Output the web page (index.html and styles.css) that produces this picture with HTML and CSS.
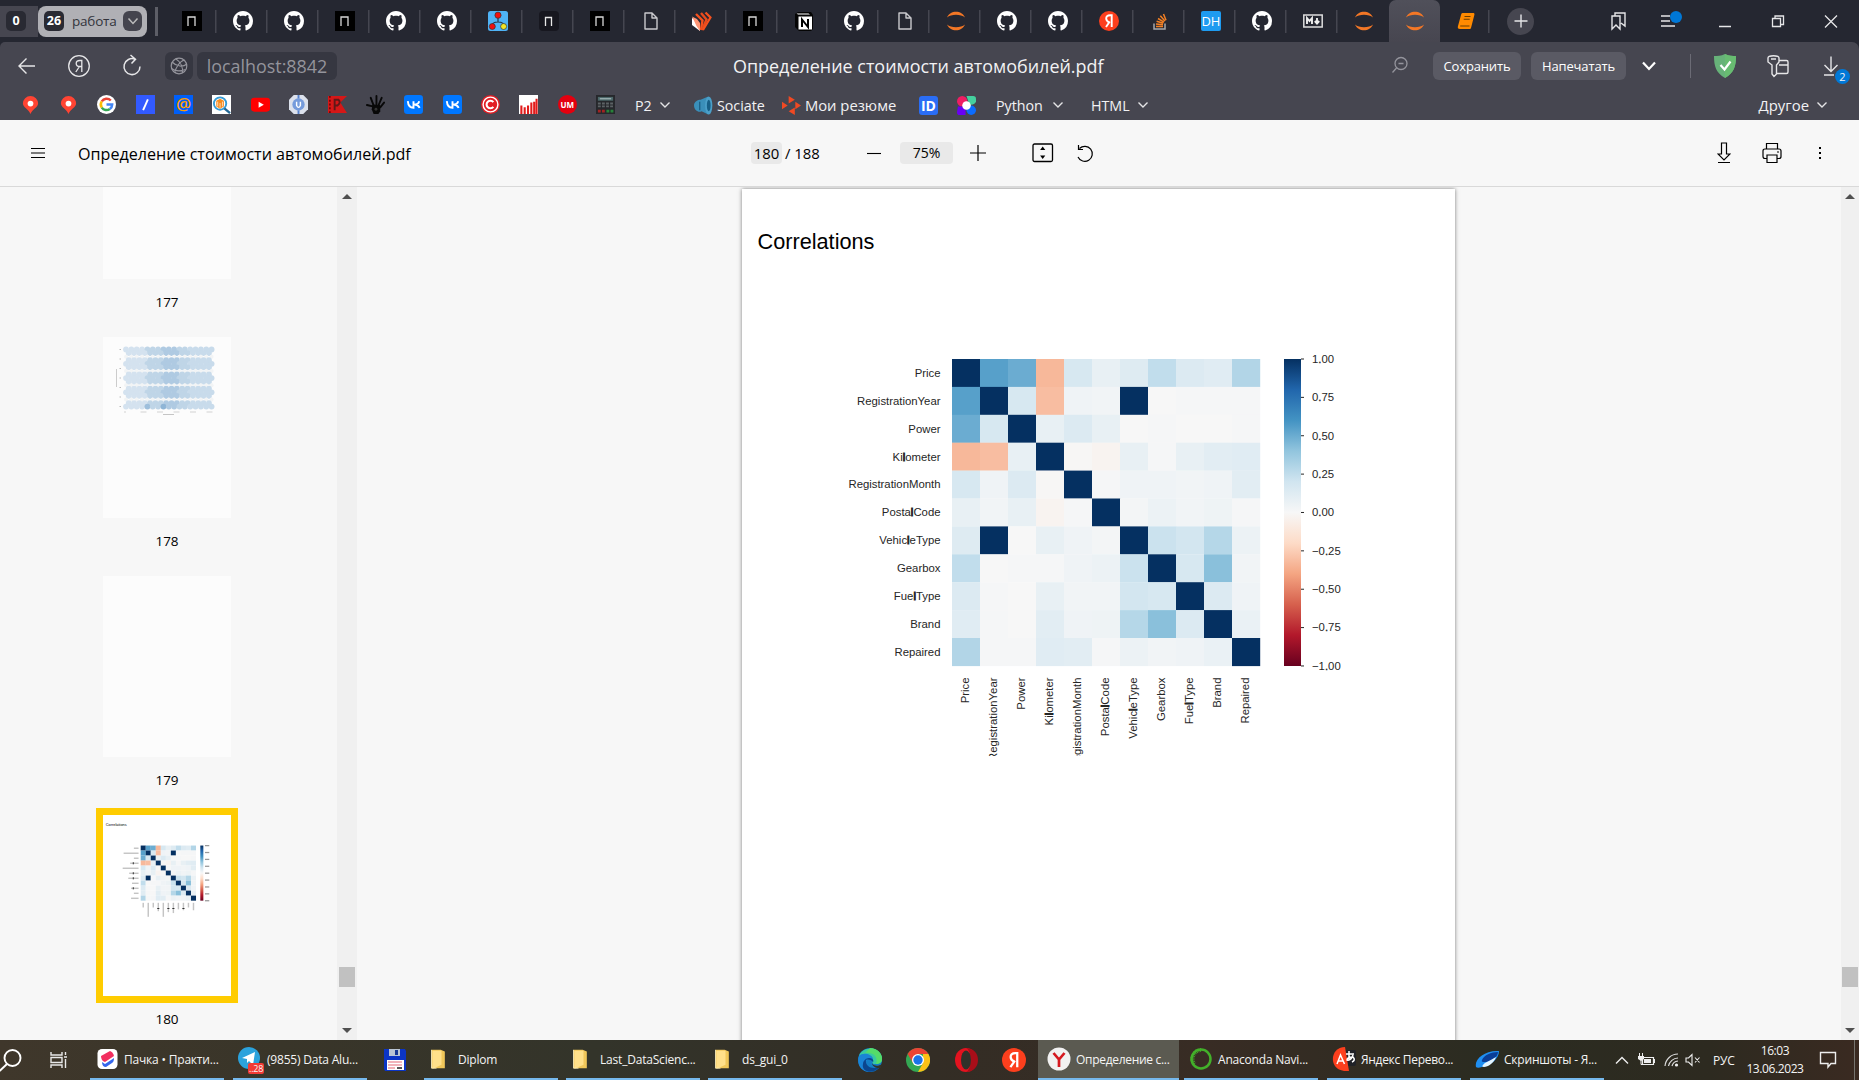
FILE: index.html
```html
<!DOCTYPE html>
<html lang="ru">
<head>
<meta charset="utf-8">
<title>Определение стоимости автомобилей.pdf</title>
<link rel="stylesheet" href="styles.css">
</head>
<body>
<svg class="defs" width="0" height="0" aria-hidden="true">
  <symbol id="gh" viewBox="0 0 16 16"><path fill="#fff" d="M8 0C3.58 0 0 3.58 0 8c0 3.54 2.29 6.53 5.47 7.59.4.07.55-.17.55-.38 0-.19-.01-.82-.01-1.49-2.01.37-2.53-.49-2.69-.94-.09-.23-.48-.94-.82-1.13-.28-.15-.68-.52-.01-.53.63-.01 1.08.58 1.23.82.72 1.21 1.87.87 2.33.66.07-.52.28-.87.51-1.07-1.78-.2-3.64-.89-3.64-3.95 0-.87.31-1.59.82-2.15-.08-.2-.36-1.02.08-2.12 0 0 .67-.21 2.2.82.64-.18 1.32-.27 2-.27s1.36.09 2 .27c1.53-1.04 2.2-.82 2.2-.82.44 1.1.16 1.92.08 2.12.51.56.82 1.27.82 2.15 0 3.07-1.87 3.75-3.65 3.95.29.25.54.73.54 1.48 0 1.07-.01 1.93-.01 2.2 0 .21.15.46.55.38A8.01 8.01 0 0 0 16 8c0-4.42-3.58-8-8-8z"/></symbol>
  <symbol id="n" viewBox="0 0 20 20"><path fill="#000" d="M0 0h20v20H0z"/><path d="M6 15V6h7v9" fill="none" stroke="#d8d8d8" stroke-width="1.3"/></symbol>
  <symbol id="nd" viewBox="0 0 20 20"><rect width="20" height="20" rx="4" fill="#17171f"/><path d="M6.500 15V6.500h6V15" fill="none" stroke="#e8e8e8" stroke-width="1.3"/></symbol>
  <symbol id="file" viewBox="0 0 20 20"><path d="M4 2h7l5 5v11H4zM11 2v5h5" fill="none" stroke="#c9c9cd" stroke-width="1.4" stroke-linejoin="round"/></symbol>
  <symbol id="jup" viewBox="0 0 20 20"><path fill="#f37726" d="M1 6.500C4-1.200 16-1.200 19 6.500 15 2.800 5 2.800 1 6.500zM1 13.500c3 7.700 15 7.700 18 0-4 3.700-14 3.700-18 0z"/></symbol>
  <symbol id="tree" viewBox="0 0 20 20"><rect width="20" height="20" rx="2.500" fill="#4fb3f6"/><path d="M10 5v6M4 15c0-3 2-4 6-4s6 1 6 4" fill="none" stroke="#234" stroke-width="1.200"/><g stroke="#333" stroke-width=".7"><circle cx="10" cy="4.200" r="3.100" fill="#f00f0f"/><circle cx="4.300" cy="15.500" r="3" fill="#f00f0f"/><circle cx="15.600" cy="15.500" r="3" fill="#f2e526"/></g></symbol>
  <symbol id="rp" viewBox="0 0 20 20"><path d="M0 7l4 2 4 5v6l-8-6z" fill="#fff"/><path d="M0 5.500 5 8l3 4v8l-3.500-5z" fill="#ff9575"/><path d="M4 3l6.500 6.500L9 19" fill="none" stroke="#f4511e" stroke-width="2.400"/><path d="M9 2l5.500 6.500L10 19" fill="none" stroke="#e84a1c" stroke-width="2.400"/><path d="M13.500 1.500l5 5L11 19" fill="none" stroke="#f4511e" stroke-width="2.200"/></symbol>
  <symbol id="notion" viewBox="0 0 20 20"><path d="M1 3l3-2 13 0 2 3v14l-2 2H5l-4-4z" fill="#050505"/><path d="M2.500 2.500h12l1.500 1H4z" fill="#fff"/><path d="M4.500 5.500H18v13H4.500z" fill="#fff"/><path d="M8 16V8.500l6 7.500V8" fill="none" stroke="#000" stroke-width="2"/></symbol>
  <symbol id="ya" viewBox="0 0 20 20"><circle cx="10" cy="10" r="10" fill="#fc3f1d"/><path d="M12.700 16V4.300h-1.500c-3 0-4 1.400-4 3.300 0 2 1 3 3.300 4M10.800 10.500 7 16" fill="none" stroke="#fff" stroke-width="1.900"/></symbol>
  <symbol id="so" viewBox="0 0 20 20"><path d="M4 12.500V18h11v-5.500" fill="none" stroke="#a7a9ac" stroke-width="1.500"/><path d="M6 15.500h7M6 13l7 .8M6.600 10.300l6.700 2M8 7.500l6 3.600M10.300 4.800l4.600 5.300M13.500 3l2.500 6.300" stroke="#f48024" stroke-width="1.500"/></symbol>
  <symbol id="md" viewBox="0 0 20 20"><rect x=".8" y="4" width="18.400" height="12" fill="none" stroke="#ddd" stroke-width="1.500"/><path d="M4 13V7l2.500 3L9 7v6M14 7v5M11.800 10l2.200 2.500 2.200-2.500" fill="none" stroke="#eee" stroke-width="1.900"/></symbol>
  <symbol id="book" viewBox="0 0 20 20"><path d="M6.500 2H17c1.200 0 1.700.7 1.400 1.700L15 17c-.2.700-.8 1-1.500 1H4c-2 0-2.600-1.300-2-3L5 4c.3-1.300.7-2 1.500-2z" fill="#ff8a00"/><path d="M8.500 5.500h6M7.700 8.200h6M4.200 15h9.300" stroke="#6b3c00" stroke-width="1.100"/></symbol>
  <symbol id="pin" viewBox="0 0 20 20"><path d="M10 1a8 8 0 0 0-8 8c0 4 6 6 8 11 2-5 8-7 8-11a8 8 0 0 0-8-8z" fill="#ff4433"/><circle cx="10" cy="9" r="3" fill="#fff"/></symbol>
  <symbol id="vk" viewBox="0 0 20 20"><rect width="20" height="20" rx="3.500" fill="#07f"/><path d="M4 6.500c.4 4.500 2.500 7 6 7V6.500M16 6.500c-.5 2-2.500 3.500-5 3.500 3 0 4.500 1.500 5.500 3.500" fill="none" stroke="#fff" stroke-width="2"/></symbol>
  <symbol id="chev" viewBox="0 0 12 12"><path d="M1.500 3.500 6 8l4.500-4.500" fill="none" stroke="#e4e4e6" stroke-width="1.400"/></symbol>
  <symbol id="folder" viewBox="0 0 24 24"><path d="M3 1h11l5 2v20H3z" fill="#f0c75a"/><path d="M4 2h11v17l-9 4H4z" fill="#ffe08a"/><path d="M3 1v22h6" fill="none" stroke="#fff0bd" stroke-width="1"/></symbol>
</svg>

<header class="tabbar">
  <div class="counter"><b>0</b></div>
  <div class="group"><b>26</b><span>работа</span><i><svg width="12" height="12"><path d="M1.500 3.500 6 8.500l4.500-5" fill="none" stroke="#bbb" stroke-width="1.500"/></svg></i></div>
  <div class="divider"></div>
  <nav class="tabs">
    <a><svg><use href="#n"/></svg></a><a><svg><use href="#gh"/></svg></a><a><svg><use href="#gh"/></svg></a><a><svg><use href="#n"/></svg></a><a><svg><use href="#gh"/></svg></a><a><svg><use href="#gh"/></svg></a><a><svg><use href="#tree"/></svg></a><a><svg><use href="#nd"/></svg></a><a><svg><use href="#n"/></svg></a><a><svg><use href="#file"/></svg></a><a><svg><use href="#rp"/></svg></a><a><svg><use href="#n"/></svg></a><a><svg><use href="#notion"/></svg></a><a><svg><use href="#gh"/></svg></a><a><svg><use href="#file"/></svg></a><a><svg><use href="#jup"/></svg></a><a><svg><use href="#gh"/></svg></a><a><svg><use href="#gh"/></svg></a><a><svg><use href="#ya"/></svg></a><a><svg><use href="#so"/></svg></a><a><span class="dh">DH</span></a><a><svg><use href="#gh"/></svg></a><a><svg><use href="#md"/></svg></a><a class="nosep"><svg><use href="#jup"/></svg></a><a class="nosep active"><svg><use href="#jup"/></svg></a><a><svg><use href="#book"/></svg></a>
  </nav>
  <div class="plus"><svg width="14" height="14"><path d="M7 .5v13M.5 7h13" stroke="#e6e6e8" stroke-width="1.400"/></svg></div>
  <div class="winctl">
    <svg viewBox="0 0 20 20"><path d="M3 5h8v13l-4-4-4 4zM6 5V2h10v13l-4-3" fill="none" stroke="#e6e6e8" stroke-width="1.400"/></svg>
    <svg class="menu" viewBox="0 0 24 20"><path d="M2 5h9M2 10h9M2 15h14" stroke="#e6e6e8" stroke-width="1.500"/><circle cx="17" cy="6" r="6" fill="#0078d7"/></svg>
    <svg viewBox="0 0 20 20"><path d="M4 15.500h12" stroke="#e6e6e8" stroke-width="1.500"/></svg>
    <svg viewBox="0 0 20 20"><path d="M4.500 7.500h8v8h-8zM7 7.500V5h8.500v8.500h-3" fill="none" stroke="#e6e6e8" stroke-width="1.300"/></svg>
    <svg viewBox="0 0 20 20"><path d="m4 4.500 12 12M16 4.500l-12 12" stroke="#e6e6e8" stroke-width="1.300"/></svg>
  </div>
</header>

<section class="chrome">
  <div class="address">
    <div class="navicons">
      <svg width="20" height="20"><path d="M18 10H2M9.500 2.500 2 10l7.500 7.500" fill="none" stroke="#e6e6e8" stroke-width="1.400"/></svg>
      <svg width="24" height="24"><circle cx="12" cy="12" r="10.300" fill="none" stroke="#e6e6e8" stroke-width="1.300"/><path d="M14.800 18V6.500h-2c-2.500 0-3.600 1.200-3.600 3 0 2 1.200 3 3.600 3h2M12.500 12.500 8.800 18" fill="none" stroke="#e6e6e8" stroke-width="1.300"/></svg>
      <svg width="22" height="24"><path d="M14 5.200A8 8 0 1 0 19 12.500M9.500 1l5 4.200-4 4.300" fill="none" stroke="#e6e6e8" stroke-width="1.500"/></svg>
    </div>
    <div class="globe"><svg width="18" height="18" fill="none" stroke="#94949c" stroke-width="1.200"><circle cx="9" cy="9" r="7.800"/><path d="M2 5c5 5 11 5 15 2M5 16C5 11 10 4 14.500 3M6 2c5 3 7 9 6.500 14M1.500 11.500c4 3 9 3 14 1"/></svg></div>
    <div class="host">localhost:8842</div>
    <h1>Определение стоимости автомобилей.pdf</h1>
    <div class="pageactions">
      <svg class="loupe" width="18" height="18"><g fill="none" stroke="#94949c" stroke-width="1.300"><circle cx="10" cy="7.500" r="6"/><path d="M7.500 7.500h5M5.500 12l-4 4.500"/></g></svg>
      <button class="save">Сохранить</button><button class="print">Напечатать</button>
      <svg class="more" width="16" height="12"><path d="m2 2.500 6 6.500 6-6.500" fill="none" stroke="#fff" stroke-width="2.200"/></svg>
      <div class="vline"></div>
      <svg class="shield" width="24" height="26"><path d="M12 1c4 2 8 2 11 2 0 10-2 17-11 22C3 20 1 13 1 3c3 0 7 0 11-2z" fill="#67b279"/><path d="M12 1v24c9-5 11-12 11-22-3 0-7 0-11-2z" fill="#68bc71"/><path d="m7.500 12 4 4.500 6-8" fill="none" stroke="#fff" stroke-width="2.200"/></svg>
      <svg class="keys" width="24" height="24" fill="none" stroke="#e6e6e8" stroke-width="1.400"><path d="M2 4c0-3 11-3 11 0v4l-2.500 3v9L8 22.500 6 20v-9L2 8zM5 5h5M13 6.500h7.500c1 0 1.500.5 1.500 1.500v10c0 1-.5 1.500-1.500 1.500H11M13 11h9"/></svg>
      <div class="dl"><svg width="18" height="22"><path d="M9 1.500V16M2.500 10 9 16.500l6.500-6.500M2 20h10" fill="none" stroke="#e6e6e8" stroke-width="1.400"/></svg><em>2</em></div>
    </div>
  </div>
  <div class="bookmarks">
    <div class="favs">
      <a><svg><use href="#pin"/></svg></a><a><svg><use href="#pin"/></svg></a>
      <a><svg viewBox="0 0 20 20"><circle cx="10" cy="10" r="10" fill="#fff"/><g fill="none" stroke-width="2.600"><path d="M14.500 5.800A6 6 0 0 0 5 6.700" stroke="#ea4335"/><path d="M5 6.700a6 6 0 0 0 0 6.600" stroke="#fbbc05"/><path d="M5 13.300a6 6 0 0 0 8.500 1.400" stroke="#34a853"/><path d="M13.500 14.700A6 6 0 0 0 16 10h-6" stroke="#4285f4"/></g></svg></a>
      <a><svg viewBox="0 0 20 20"><path d="M0 0h20v20H0z" fill="#325aff"/><path d="M12.500 4.500 7.500 16" stroke="#fff" stroke-width="2"/></svg></a>
      <a><span class="at">@</span></a>
      <a><svg viewBox="0 0 20 20"><path d="M0 0h20v20H0z" fill="#fff"/><circle cx="8.500" cy="9" r="6.500" fill="none" stroke="#349bd6" stroke-width="2"/><path d="m13 14 6 5" stroke="#236896" stroke-width="2.500"/><path d="m8.500 4 4 2v6l-4 2.500-4-2.500V6z" fill="#f78b1d"/><path d="M6 7v5M8.500 8.500v5M11 7v5" stroke="#fff" stroke-width=".7"/></svg></a>
      <a><svg viewBox="0 0 20 20"><rect y="3" width="20" height="14.500" rx="3.500" fill="#f00"/><path d="m8 7 5.500 3.200L8 13.500z" fill="#fff"/></svg></a>
      <a><svg viewBox="0 0 20 20"><path d="M5 0h10l5 5v10l-5 5H5l-5-5V5z" fill="#dce1ec"/><path d="M10 0v4M10 16v4" stroke="#5680ca" stroke-width="2"/><circle cx="10" cy="10" r="6.500" fill="#759bdc"/><path d="M8 7v4q2 4 4 0V7" fill="none" stroke="#fff" stroke-width="1.500"/></svg></a>
      <a><svg viewBox="0 0 20 20"><path d="M0 1h20l-7 7 7 11H0z" fill="#d51717"/><path d="M2 1v18" stroke="#600" stroke-dasharray="2 2" stroke-width="1.500"/><path d="M7 16V5h4q3 3-1 6H7" fill="none" stroke="#601818" stroke-width="2"/></svg></a>
      <a><svg viewBox="0 0 20 20"><path d="M7 12 1 10.500M8 11 5 3M11 10V1M13.500 10l3-7M15 13l4-5" stroke="#080808" stroke-width="2" stroke-linecap="round"/><path d="m7 10 8 .5V17l-2 3H8l-2-5z" fill="#080808"/><circle cx="10.500" cy="15" r="1.500" fill="#333"/></svg></a>
      <a><svg><use href="#vk"/></svg></a><a><svg><use href="#vk"/></svg></a>
      <a><svg viewBox="0 0 20 20"><circle cx="10" cy="10" r="10" fill="#e31e24"/><circle cx="10" cy="10" r="7.800" fill="none" stroke="#fff" stroke-width="1.500"/><path d="M13 7.500a4 4 0 1 0 0 5" fill="none" stroke="#fff" stroke-width="2.200"/></svg></a>
      <a><svg viewBox="0 0 20 20"><path d="M0 0h20v20H0z" fill="#fff"/><path d="M2.500 20v-9M6 20v-7M9.500 20v-9M13 20V8M16 20V7M18.500 20V4" stroke="#e21b1b" stroke-width="2.200"/></svg></a>
      <a><span class="um">UM</span></a>
      <a><svg viewBox="0 0 20 20"><path d="M0 0h20v20H0z" fill="#26282c"/><path d="M2 2h16v4H2z" fill="#4c6769"/><path d="M4 4h12" stroke="#bcc" /><path d="M2 9h16M2 12h16" stroke="#5c6265" stroke-width="2" stroke-dasharray="3 1.300"/><path d="M2 17h8" stroke="#a32222" stroke-width="3" stroke-dasharray="3 1.300"/><path d="M11 17h8" stroke="#27843a" stroke-width="3" stroke-dasharray="3 1.300"/></svg></a>
    </div>
    <div class="bm p2">P2<svg class="chev"><use href="#chev"/></svg></div>
    <div class="bm sociate"><svg viewBox="0 0 20 20"><path d="M0 10c0-4 4-6 7-6l8-3.500v19L8 16c-3 2-8-1-8-6z" fill="#3a8fb9"/><ellipse cx="15.500" cy="10" rx="3.800" ry="9.500" fill="#4b9fc8"/><ellipse cx="15.500" cy="10" rx="2" ry="6" fill="#175f86"/><path d="M6 6v9" stroke="#1d6288" stroke-width="1.500"/></svg><span>Sociate</span></div>
    <div class="bm resume"><svg viewBox="0 0 20 20" fill="#f04923"><path d="M7 0l6.500 4L7 8zM13.500 20 7 16l6.500-4zM0 6l6 4-6 4zM14 6l6 4-6 4z"/></svg><span>Мои резюме</span></div>
    <div class="bm vid"><span class="idlogo">ID</span></div>
    <div class="bm flower"><svg viewBox="0 0 20 20"><circle cx="5.500" cy="5.500" r="5.500" fill="#ee1e63"/><path d="M10 0h7q3 0 3 3v3q-2 4-7 3z" fill="#45d09e"/><path d="M1 11h8v9H3q-3 0-3-3z" fill="#6a00f5"/><circle cx="15" cy="15" r="5" fill="#0b6cff"/><circle cx="10" cy="10" r="4.500" fill="#fff"/></svg></div>
    <div class="bm py">Python<svg class="chev"><use href="#chev"/></svg></div>
    <div class="bm html">HTML<svg class="chev"><use href="#chev"/></svg></div>
    <div class="bm other">Другое<svg class="chev"><use href="#chev"/></svg></div>
  </div>
</section>

<section class="pdfbar">
  <svg class="burger" width="16" height="12"><path d="M1 1.500h14M1 6h14M1 10.500h14" stroke="#000" stroke-width="1.100"/></svg>
  <h2>Определение стоимости автомобилей.pdf</h2>
  <div class="pager"><span class="cur">180</span><span class="total">/ 188</span></div>
  <svg class="minus" width="14" height="14"><path d="M0 7.500h14" stroke="#000" stroke-width="1.100"/></svg>
  <span class="zoom">75%</span>
  <svg class="add" width="16" height="16"><path d="M0 8h16M8 0v16" stroke="#000" stroke-width="1.200"/></svg>
  <svg class="fit" width="22" height="20"><rect x="1" y="1" width="19.500" height="17.500" rx="1.500" fill="none" stroke="#000" stroke-width="1.300"/><path d="m10.700 3.500 2.600 3.500h-5.200zM10.700 16l2.600-3.500h-5.200z"/></svg>
  <svg class="rot" width="18" height="19"><path d="M3.500 4.500A7.500 7.500 0 1 1 2 13M2.500 1v4.500H7" fill="none" stroke="#000" stroke-width="1.200"/></svg>
  <div class="pdfright">
    <svg width="14" height="22"><path d="M4.500 1h5v11H13l-6 6-6-6h3.500zM1 20.500h12" fill="none" stroke="#000" stroke-width="1.200"/></svg>
    <svg width="20" height="22"><path d="M4.500 7V1.500h11V7M5 16.500H3q-2 0-2-2V9q0-2 2-2h14q2 0 2 2v5.500q0 2-2 2h-2M5 13h10v7.500H5z" fill="none" stroke="#000" stroke-width="1.200"/><path d="M15 10h2" stroke="#000"/></svg>
    <svg width="4" height="14"><path d="M1 1h2v2H1zM1 6h2v2H1zM1 11h2v2H1z"/></svg>
  </div>
</section>

<main class="viewer">
  <aside class="thumbs">
    <figure><div class="thumb"></div><figcaption>177</figcaption></figure>
    <figure><div class="thumb"><svg id="hexbin" width="128" height="181"></svg></div><figcaption>178</figcaption></figure>
    <figure><div class="thumb"></div><figcaption>179</figcaption></figure>
    <figure class="selected"><div class="thumb"><svg id="mini" width="128" height="181" viewBox="0 0 713 1008"></svg></div><figcaption>180</figcaption></figure>
  </aside>
  <div class="scroll side"><i class="up"></i><b></b><i class="down"></i></div>
  <div class="canvas"><article class="page"><svg id="report" width="713" height="851"></svg></article></div>
  <div class="scroll"><i class="up"></i><b></b><i class="down"></i></div>
</main>

<footer class="taskbar">
  <svg class="tsearch" width="24" height="24"><circle cx="13.500" cy="10" r="8" fill="none" stroke="#fff" stroke-width="1.900"/><path d="M8 16 .5 23" stroke="#fff" stroke-width="2"/></svg>
  <svg class="tview" width="20" height="18"><path d="M1 1v3h11V1M1 17v-3h11v3M1 6.500h11v5H1zM15.500 1v3M15.500 8v9M14 6h3" fill="none" stroke="#e8e8e8" stroke-width="1.400"/></svg>
  <div class="task t1"><svg viewBox="0 0 24 24"><rect x="2.500" y="2" width="20" height="20" rx="4.500" fill="#fff"/><path d="m6 9 9-5q3 1 4 5l-9 6q-4-1-4-6z" fill="#f22f60"/><path d="m7 15 3 2 9-6q0 4-2 5l-6 4q-4 0-4-5z" fill="#3566eb"/></svg><span>Пачка • Практи...</span></div>
  <div class="task t2"><svg viewBox="0 0 24 24"><circle cx="11" cy="11" r="11" fill="#2ba2dc"/><path d="m4 11 13-6-2 13-4-4-2 2v-4z" fill="#fff"/></svg><em>..28</em><span>(9855) Data Alu...</span></div>
  <div class="pin floppy"><svg viewBox="0 0 24 24"><path d="M1 1h21l1 2v20H2l-1-2z" fill="#0b35c6"/><path d="M6 1h11v7H6z" fill="#b9c5d4"/><path d="M12 2h3v5h-3z" fill="#173a94"/><path d="M4 12h17v10H4z" fill="#fff"/><path d="M5 14h14M5 17h14M5 20h7" stroke="#ed9ba4" stroke-width="1.300"/><path d="M14 20h5" stroke="#555" stroke-width="2"/></svg></div>
  <div class="task t3 fold"><svg><use href="#folder"/></svg><span>Diplom</span></div>
  <div class="task t4 fold"><svg><use href="#folder"/></svg><span>Last_DataScienc...</span></div>
  <div class="task t5 fold"><svg><use href="#folder"/></svg><span>ds_gui_0</span></div>
  <div class="pins">
    <svg viewBox="0 0 24 24"><circle cx="12" cy="12" r="12" fill="#147dc5"/><path d="M1 8C4-1 20-3 24 9c1 5-2 7-7 7-4 0-2-2-2-4 0-5-9-7-14-4z" fill="#38c9a0"/><path d="M12 0c7 0 12 5 12 11 0 3-2 5-6 5 3-9-5-12-11-11z" fill="#55dc69"/><path d="M1 8c4-4 13-2 14 3-4-2-8 1-7 6 1 4 4 6 7 6.500C4 26-2 17 1 8z" fill="#1a84d6"/><path d="M8 12c-1 6 5 10 14 7-7 8-19 5-17-3 0-3 3-6 6-6 4 0 5 3 4 4-1-2-5-3-7-2z" fill="#0b468e"/><path d="M14 15c1 3 6 4 10 1l-1 4c-5 1-9-2-9-5z" fill="#33342a"/></svg>
    <svg viewBox="0 0 24 24"><circle cx="12" cy="12" r="12" fill="#34a853"/><path d="M1.600 6A12 12 0 0 1 22.400 6H12L7 15z" fill="#ea4335"/><path d="M22.400 6A12 12 0 0 1 12 24l5-9V6z" fill="#fbc116"/><circle cx="12" cy="12" r="6" fill="#fff"/><circle cx="12" cy="12" r="4.700" fill="#1a73e8"/></svg>
    <svg viewBox="0 0 24 24"><ellipse cx="12" cy="12" rx="11" ry="12" fill="#e3131f"/><path d="M12 0c16 0 16 24 0 24 6-2 6-22 0-24z" fill="#a80e19"/><ellipse cx="12" cy="12" rx="5" ry="9.500" fill="#30312a"/></svg>
    <svg><use href="#ya"/></svg>
  </div>
  <div class="task t6 on"><svg viewBox="0 0 24 24"><circle cx="12" cy="12" r="11.500" fill="#f1f1f1"/><path d="M6.500 6 12 12.500 17.500 6M12 12v8" fill="none" stroke="#d51920" stroke-width="2.700"/></svg><span>Определение с...</span></div>
  <div class="task t7"><svg viewBox="0 0 24 24"><circle cx="12" cy="12" r="9.500" fill="none" stroke="#43b02a" stroke-width="2.500"/><path d="M12 3a9 9 0 0 0-7 14" fill="none" stroke="#43b02a" stroke-width="4" stroke-dasharray="1 1"/></svg><span>Anaconda Navi...</span></div>
  <div class="task t8"><svg viewBox="0 0 24 24"><path d="M12 3h10q2 0 2 2v12q0 2-2 2h-8z" fill="#202228"/><path d="M13 0C-2 0-4 22 12 24h5z" fill="#fc3f1d"/><path d="M5 17 8.500 8l4 9M6.500 14h5M14 7h8M17 4v9M21 8q-2 6-6 5 0-3 6-3 3 3-1 5" fill="none" stroke="#fff" stroke-width="1.500"/></svg><span>Яндекс Перево...</span></div>
  <div class="task t9"><svg viewBox="0 0 24 24"><path d="M1 20C-1 12 10 3 24 4c0 8-9 15-17 16-3 1-5 1-6 0z" fill="#1f8ff2"/><path d="M7 13c2-5 9-8 16-8 0 5-6 9-12 10-3 0-5 0-4-2z" fill="#0a3d96"/><path d="M8 18c2-3 7-4 13-8-2 6-8 10-12 10-2 0-2-1-1-2z" fill="#e4f5ff"/></svg><span>Скриншоты - Я...</span></div>
  <div class="tray">
    <svg class="arr" width="16" height="12"><path d="m2 9.500 6-6 6 6" fill="none" stroke="#eee" stroke-width="1.400"/></svg>
    <svg class="bat" width="18" height="14"><path d="M5.500 4.500h11v7h-11z" fill="none" stroke="#eee" stroke-width="1.200"/><path d="M7 6h7v4H7zM16 6h2v4h-2zM1 3h6v3L4 8 1 6z" fill="#eee"/><path d="M2.500 0v3M5.500 0v3M4 7v4.500h2" stroke="#eee" fill="none"/></svg>
    <svg class="wifi" width="16" height="16"><path d="M1 14A13 13 0 0 1 14 2M4.500 14A10 10 0 0 1 14 6M8 14a7 7 0 0 1 6-5" fill="none" stroke="#ddd" stroke-width="1.200"/><circle cx="12.500" cy="13" r="1.600" fill="#eee"/></svg>
    <svg class="mute" width="16" height="14"><path d="M1 5h2.500L7 1.500v11L3.500 9H1zM10 4.500l4.500 5M14.500 4.500l-4.500 5" fill="none" stroke="#eee" stroke-width="1.100"/></svg>
    <span class="lang">РУС</span>
    <div class="clock"><span>16:03</span><span>13.06.2023</span></div>
    <svg class="note" width="18" height="18"><path d="M1.500 1.500h15v11H12l-3 3.500V12.500H1.500z" fill="none" stroke="#eee" stroke-width="1.400"/></svg>
    <i class="desk"></i>
  </div>
</footer>
<script src="chart.js"></script>
</body>
</html>
```
FILE: styles.css
```css
* { box-sizing: border-box; }
body { margin: 0; width: 1859px; height: 1080px; overflow: hidden; display: flex; flex-direction: column; background: #f7f7f7; font-family: "Open Sans", "Noto Sans", sans-serif; color: #000; }
svg { display: block; flex: none; }
.defs { position: absolute; }
h1, h2, figure { margin: 0; font-weight: 400; }

.tabbar { height: 42px; flex: none; background: #252731; display: flex; align-items: center; }
.counter { width: 38px; height: 31px; background: #464650; display: flex; align-items: center; padding-left: 6px; }
.counter b, .group b { width: 20px; height: 20px; border-radius: 5px; background: #292a33; color: #fff; font-size: 12.5px; line-height: 20px; text-align: center; }
.group { width: 109px; height: 31px; background: #b0b0b5; border-radius: 8px; display: flex; align-items: center; padding: 0 5px 0 6px; }
.group span { margin-left: 8px; width: 51px; font-size: 13.500px; color: #33343c; letter-spacing: -.2px; line-height: 18px; padding-bottom: 1px; }
.group i { width: 19px; height: 20px; border-radius: 6px; background: #44444e; display: grid; place-items: center; }
.divider { width: 3px; height: 29px; background: #5d5e67; margin: 0 12.500px 0 8px; }
.tabs { display: flex; width: 1324px; height: 42px; margin-left: -3.500px; }
.tabs a { flex: 1; display: flex; align-items: center; justify-content: center; background: linear-gradient(#454650, #454650) right 1px center / 1.500px 23px no-repeat; }
.tabs svg { width: 20px; height: 20px; }
.tabs a.nosep { background: none; }
.tabs a.active { background: linear-gradient(#50505a, #474650); border-radius: 7px 7px 0 0; }
.dh { width: 20px; height: 20px; background: #1e9bf0; border-radius: 2px; color: #fff; font-size: 13px; line-height: 20px; text-align: center; }
.plus { width: 27px; height: 27px; border-radius: 50%; background: #464650; margin-left: 16px; display: grid; place-items: center; }
.winctl { margin-left: auto; margin-right: 18px; display: flex; gap: 33px; }
.winctl svg { width: 20px; height: 20px; }
.winctl svg.menu { width: 24px; margin: 0 -1px 0 -3px; }

.chrome { height: 78px; flex: none; background: #464650; color: #f2f2f4; border-radius: 5px 7px 0 0; box-shadow: 0 -7px 0 #252731; position: relative; z-index: 0; }
.tabbar { position: relative; z-index: 1; }
.chrome { box-shadow: none; }
body { background: linear-gradient(#252731 60px, #f7f7f7 60px); }
.address { height: 48px; display: flex; align-items: center; }
.navicons { display: flex; align-items: center; width: 165px; padding-left: 17px; gap: 30px; }
.globe, .host { background: #363741; border-radius: 6px; height: 28px; display: flex; align-items: center; justify-content: center; }
.globe { width: 28px; }
.host { width: 140px; margin-left: 4px; color: #94949c; font-size: 17.900px; }
.address h1 { margin-left: 396px; width: 373px; white-space: nowrap; font-size: 17.950px; line-height: 28px; }
.pageactions { flex: 1; display: flex; align-items: center; }
.loupe { margin-left: 285px; margin-top: -3px; }
.pageactions button { height: 28px; border: 0; border-radius: 6px; background: #5a5a64; color: #fff; font: 13px "Open Sans", sans-serif; padding: 0; letter-spacing: -.15px; }
.save { width: 88px; margin-left: 24px; }
.print { width: 95px; margin-left: 10px; }
.more { margin-left: 15px; }
.vline { width: 1px; height: 24px; background: #6b6b75; margin-left: 33px; }
.shield { margin-left: 22px; }
.keys { margin-left: 29px; }
.dl { margin-left: 32px; position: relative; }
.dl em { position: absolute; left: 13px; top: 14px; width: 15px; height: 15px; border-radius: 50%; background: #0078d7; font: 11px/15px "Open Sans", sans-serif; text-align: center; }
.bookmarks { height: 30px; display: flex; align-items: center; padding-left: 10.900px; font-size: 14.300px; }
.favs { display: flex; width: 614px; padding-bottom: 1px; }
.favs a { flex: 1; display: flex; justify-content: center; }
.favs svg, .bm svg, .at, .um, .idlogo { width: 19px; height: 19px; display: block; text-align: center; color: #fff; }
.at { background: #005ff9; color: #ff9e00; font-size: 17px; line-height: 17px; font-weight: 600; }
.um { background: #e3000f; border-radius: 50%; font-size: 8px; font-weight: 700; line-height: 19px; }
.idlogo { background: #2a6df5; border-radius: 3px; font-size: 14px; line-height: 19px; font-weight: 700; }
.bm { display: flex; align-items: center; gap: 4px; white-space: nowrap; flex: none; }
.bm svg.chev { width: 12px; height: 12px; margin-left: 3px; }
.p2 { width: 60px; margin: 0 -1px 0 10px; }
.p2 svg.chev { margin-left: auto; margin-right: 24px; }
.sociate { width: 88px; }
.resume { width: 137px; font-size: 14.800px; }
.vid, .flower { width: 38px; }
.flower { margin-right: 1px; }
.py { width: 95px; }
.py svg.chev { margin-left: auto; margin-right: 27px; }
.other { margin-left: auto; margin-right: 31px; font-size: 14.900px; }

.pdfbar { height: 67px; flex: none; background: #f7f7f7; border-bottom: 1px solid #d9d9d9; display: flex; align-items: center; }
.burger { margin-left: 30px; }
.pdfbar h2 { width: 333px; margin-left: 32px; font-size: 16.130px; white-space: nowrap; padding-top: 1px; }
.pager { display: flex; margin-left: 340px; width: 71px; font-size: 14.900px; line-height: 23px; align-items: center; }
.cur, .zoom { background: #e9e9e9; border-radius: 4px; text-align: center; height: 22px; }
.cur { width: 31px; margin-right: 3px; }
.total { white-space: nowrap; }
.minus { margin-left: 45px; }
.zoom { width: 53px; margin-left: 19px; font-size: 14px; line-height: 22px; }
.add { margin-left: 17px; }
.fit { margin-left: 46px; }
.rot { margin-left: 22px; }
.pdfright { margin-left: auto; margin-right: 37px; display: flex; align-items: center; gap: 31px; }
.pdfright svg:nth-child(3) { margin-left: 5px; }

.viewer { flex: 1; min-height: 0; display: flex; overflow: hidden; background: #f7f7f7; }
.thumbs { width: 337px; padding-left: 96px; display: flex; flex-direction: column; justify-content: flex-end; overflow: hidden; }
.thumbs figure { height: 239px; flex: none; width: 142px; padding-top: 14px; }
.thumb { width: 128px; height: 181px; margin: 0 7px; background: #fcfcfc; }
.thumbs figcaption { text-align: center; font-size: 13.500px; line-height: 20px; margin-top: 13px; }
.selected .thumb { background: #fff; box-shadow: 0 0 0 7px #fc0; }
.scroll { width: 18px; background: #f0f0f0; display: flex; flex-direction: column; align-items: center; flex: none; }
.scroll.side { width: 20px; }
.scroll i { width: 0; border: 5px solid transparent; }
.scroll .up { border-bottom-color: #505050; border-top: 0; margin-top: 7px; }
.scroll .down { border-top-color: #505050; border-bottom: 0; margin-top: 41px; }
.scroll b { width: 16px; height: 20px; background: #c1c1c1; margin-top: 768px; }
.canvas { flex: 1; padding: 2px 0 0 385px; overflow: hidden; }
.page { width: 713px; height: 1008px; background: #fff; box-shadow: 0 0 4px rgba(0,0,0,.5); }

.taskbar { height: 40px; flex: none; display: flex; align-items: center; color: #f4f4f4; font-size: 12px; background: linear-gradient(90deg, #3f372b, #393529 15%, #33342a 32%, #332d25 50%, #382c24 65%, #2b2c21 80%, #2d2a20 92%, #3a2a21); }
.tsearch { margin-left: -1px; }
.tview { margin-left: 27px; }
.task { height: 40px; width: 134px; border-bottom: 2px solid #76b9ed; display: flex; align-items: center; padding-left: 5px; gap: 5px; white-space: nowrap; flex: none; margin-right: 9px; letter-spacing: -.2px; position: relative; }
.task svg { width: 24px; height: 24px; }
.t1 { margin-left: 20px; }
.t2 em { position: absolute; left: 15px; top: 23px; background: #f23b35; border-radius: 2px; font: 9px/11px "Open Sans", sans-serif; padding: 0 1px; }
.fold { gap: 9px; margin-right: 8px; }
.fold svg { width: 20px; height: 22px; }
.pin { width: 57px; margin-left: -9px; padding-left: 16px; }
.floppy svg { width: 24px; height: 24px; }
.pins { display: flex; gap: 24px; width: 188px; padding-left: 8px; }
.pins svg { width: 24px; height: 24px; }
.t6 { width: 141px; padding-left: 9px; margin-right: 5px; background: #5b5a51; }
.t6, .t8 { letter-spacing: -.3px; }
.tray { flex: 1; display: flex; align-items: center; height: 40px; }
.arr { margin-left: 1px; }
.bat { margin-left: 7px; }
.wifi { margin-left: 9px; }
.mute { margin-left: 5px; }
.lang { margin-left: 12px; width: 24px; letter-spacing: -.2px; }
.clock { margin-left: 9px; width: 58px; display: flex; flex-direction: column; align-items: center; line-height: 18px; letter-spacing: -.4px; }
.note { margin-left: 15px; }
.desk { width: 1px; height: 40px; background: #77756f; margin-left: auto; margin-right: 4px; }
```
FILE: chart.js
```js
const NS = 'http://www.w3.org/2000/svg';
const names = ['Price', 'RegistrationYear', 'Power', 'Kilometer', 'RegistrationMonth', 'PostalCode', 'VehicleType', 'Gearbox', 'FuelType', 'Brand', 'Repaired'];
const corr = [
  [1, .55, .5, -.33, .17, .08, .13, .25, .14, .12, .3],
  [.55, 1, .17, -.31, .04, .03, 1, 0, .01, .01, .01],
  [.5, .17, 1, .08, .14, .08, 0, .01, 0, 0, .01],
  [-.33, -.31, .08, 1, -.01, -.03, .08, .01, .08, .11, .12],
  [.17, .04, .14, -.01, 1, .01, .04, .04, .03, .04, .11],
  [.08, .03, .08, -.03, .01, 1, .02, .06, .03, .05, .01],
  [.13, 1, 0, .08, .04, .02, 1, .22, .19, .29, .06],
  [.25, 0, .01, .01, .04, .06, .22, 1, .17, .42, .03],
  [.14, .01, 0, .08, .03, .03, .19, .17, 1, .14, .04],
  [.12, .01, 0, .11, .04, .05, .29, .42, .14, 1, .07],
  [.3, .01, .01, .12, .11, .01, .06, .03, .04, .07, 1]
];
// Diverging red-blue scale, from -1 to 1
const scale = ['67001f', 'b2182b', 'd6604d', 'f4a582', 'fddbc7', 'f7f7f7', 'd1e5f0', '92c5de', '4393c3', '2166ac', '053061'];

function colour(v) {
  const t = (v + 1) * 5, i = Math.min(9, Math.floor(t)), f = t - i;
  const part = (s, k) => parseInt(s.substr(k * 2, 2), 16);
  return 'rgb(' + [0, 1, 2].map(k => Math.round(part(scale[i], k) * (1 - f) + part(scale[i + 1], k) * f)) + ')';
}
function add(parent, tag, attrs, text) {
  const el = document.createElementNS(NS, tag);
  for (const k in attrs) el.setAttribute(k, attrs[k]);
  if (text !== undefined) el.textContent = text;
  parent.appendChild(el);
  return el;
}
// Writes a label in which the given letter has a heavier stroke
function label(parent, text, heavy, attrs) {
  const el = add(parent, 'text', attrs);
  const at = text.indexOf(heavy);
  if (at < 0) { el.textContent = text; return; }
  add(el, 'tspan', {}, text.slice(0, at));
  add(el, 'tspan', { stroke: '#262626', 'stroke-width': heavy === '.' ? .3 : .9 }, heavy);
  add(el, 'tspan', {}, text.slice(at + 1));
}

function drawReport(svg, mini) {
  const x0 = 210, y0 = 170, w = 28, h = 27.9;
  const g = add(svg, 'g', { 'font-family': 'Liberation Sans, sans-serif', 'font-size': 11.35, fill: '#262626' });
  add(g, 'text', { x: 15.5, y: 60, 'font-size': 21.7, fill: '#000' }, 'Correlations');
  corr.forEach((row, r) => row.forEach((v, c) => add(g, 'rect', { x: x0 + c * w, y: y0 + r * h, width: w + .2, height: h + .2, fill: colour(v) })));
  const grad = add(g, 'linearGradient', { id: mini ? 'barMini' : 'bar', x1: 0, y1: 0, x2: 0, y2: 1 });
  scale.slice().reverse().forEach((s, i) => add(grad, 'stop', { offset: i / 10, 'stop-color': '#' + s }));
  add(g, 'rect', { x: 542, y: y0, width: 17, height: 307, fill: mini ? 'url(#barMini)' : 'url(#bar)' });
  if (mini) {
    names.forEach((n, i) => {
      const len = n.length * 5.2;
      add(g, 'rect', { x: 198 - len, y: y0 + i * h + 11, width: len, height: 8, fill: '#c4c4c4' });
      add(g, 'rect', { x: x0 + i * w + 10, y: 489, width: 8, height: Math.min(78, len), fill: '#c4c4c4' });
      if (n.includes('l')) {
        add(g, 'rect', { x: 166, y: y0 + i * h + 9, width: 5, height: 12, fill: '#222' });
        add(g, 'rect', { x: x0 + i * w + 8, y: 518, width: 12, height: 5, fill: '#222' });
      }
    });
    for (let i = 0; i < 9; i++) add(g, 'rect', { x: 568, y: y0 + i * 38.37 - 3, width: 24, height: 7, fill: '#999' });
    return;
  }
  const clip = add(g, 'clipPath', { id: 'figure' });
  add(clip, 'rect', { x: 0, y: 0, width: 713, height: 567 });
  const cols = add(g, 'g', { 'clip-path': 'url(#figure)' });
  names.forEach((n, i) => {
    label(g, n, 'l', { x: 198.5, y: y0 + i * h + 17.8, 'text-anchor': 'end' });
    label(cols, n, 'l', { transform: `translate(${x0 + i * w + 16.9},488.500) rotate(-90)`, 'text-anchor': 'end' });
  });
  for (let i = 0; i < 9; i++) {
    const v = 1 - i * .25, y = y0 + i * 38.37;
    add(g, 'path', { d: `M559 ${y}h3`, stroke: '#262626', 'stroke-width': 1 });
    label(g, (v < 0 ? '\u2212' : '') + Math.abs(v).toFixed(2), '.', { x: 570, y: y + 3.8 });
  }
}

function drawHexbin(svg) {
  for (let r = 0; r < 17; r++) {
    for (let c = 0; c < 17; c++) {
      const x = 23 + c * 5.35 + (r % 2 ? 2.7 : 0);
      if (x > 110) continue;
      const gap = r % 4 === 2;
      const dense = .28 + (c > 3 ? .16 : 0) + (c > 6 && c < 10 ? .12 : 0) - (c > 11 ? .07 : 0) + (r === 16 && (c === 4 || c === 7) ? .25 : 0);
      const mix = (a, b) => Math.round(a + (b - a) * dense);
      add(svg, 'circle', { cx: x, cy: 12.5 + r * 3.57, r: gap ? 2 : 2.9, fill: gap ? '#f2f4f5' : `rgb(${mix(248, 118)},${mix(250, 165)},${mix(252, 205)})` });
    }
  }
  for (let i = 0; i < 7; i++) add(svg, 'rect', { x: 16.5, y: 12 + i * 9.5, width: 1.5, height: 1, fill: '#bbb' });
  for (let i = 0; i < 6; i++) add(svg, 'rect', { x: 21 + i * 16.5, y: 74.500, width: i ? 6 : 2, height: 1, fill: '#d2d2d2' });
  add(svg, 'rect', { x: 13, y: 32, width: 1, height: 18, fill: '#ccc' });
  add(svg, 'rect', { x: 60, y: 77, width: 11, height: 1, fill: '#c5c5c5' });
}

drawReport(document.getElementById('report'), false);
drawReport(document.getElementById('mini'), true);
drawHexbin(document.getElementById('hexbin'));
```
